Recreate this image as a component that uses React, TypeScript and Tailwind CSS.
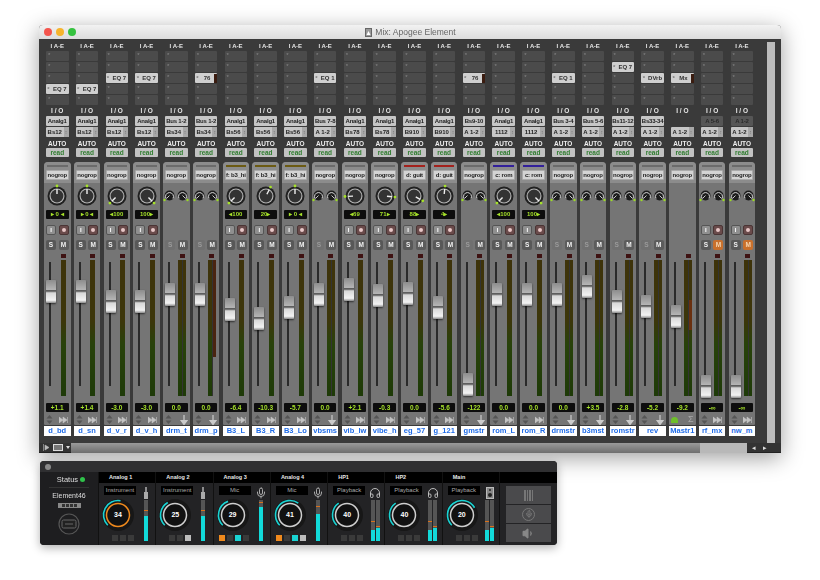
import React from "react";
import { Mic, Headphones, Volume1 } from "lucide-react";

type S = {
  name: string; val: string; fader: number; io1: string; io2: string; dimIo?: boolean;
  ins?: [number, string, boolean?]; group?: string; bar?: string;
  pan?: number | null; panText?: string; small?: boolean; rec?: boolean; aux?: boolean; orangeM?: boolean; master?: boolean; stereo?: boolean;
};

const strips: S[] = [
  { name: "d_bd", val: "+1.1", fader: 280, io1: "Analg1", io2: "Bs12", ins: [3, "EQ 7"], pan: 0, panText: "▸ 0 ◂", rec: true },
  { name: "d_sn", val: "+1.4", fader: 280, io1: "Analg1", io2: "Bs12", ins: [3, "EQ 7"], pan: 0, panText: "▸ 0 ◂", rec: true },
  { name: "d_v_r", val: "-3.0", fader: 290, io1: "Analg1", io2: "Bs12", ins: [2, "EQ 7"], pan: -135, panText: "◂100", rec: true },
  { name: "d_v_h", val: "-3.0", fader: 290, io1: "Analg1", io2: "Bs12", ins: [2, "EQ 7"], pan: 135, panText: "100▸", rec: true },
  { name: "drm_t", val: "0.0", fader: 283, io1: "Bus 1-2", io2: "Bs34", small: true, aux: true, stereo: true },
  { name: "drm_p", val: "0.0", fader: 283, io1: "Bus 1-2", io2: "Bs34", ins: [2, "76", true], small: true, aux: true, stereo: true },
  { name: "B3_L", val: "-6.4", fader: 298, io1: "Analg1", io2: "Bs56", group: "f: b3_hi", bar: "bg-[#6b5a12]", pan: -135, panText: "◂100", rec: true },
  { name: "B3_R", val: "-10.3", fader: 307, io1: "Analg1", io2: "Bs56", group: "f: b3_hi", bar: "bg-[#6b5a12]", pan: 27, panText: "20▸", rec: true },
  { name: "B3_Lo", val: "-5.7", fader: 296, io1: "Analg1", io2: "Bs56", group: "f: b3_hi", bar: "bg-[#6b5a12]", pan: 0, panText: "▸ 0 ◂", rec: true },
  { name: "vbsms", val: "0.0", fader: 283, io1: "Bus 7-8", io2: "A 1-2", ins: [2, "EQ 1"], small: true, aux: true, stereo: true },
  { name: "vib_lw", val: "+2.1", fader: 278, io1: "Analg1", io2: "Bs78", pan: -93, panText: "◂69", rec: true },
  { name: "vibe_h", val: "-0.3", fader: 284, io1: "Analg1", io2: "Bs78", pan: 96, panText: "71▸", rec: true },
  { name: "eg_57", val: "0.0", fader: 282, io1: "Analg1", io2: "B910", group: "d: guit", bar: "bg-[#a3211c]", pan: 119, panText: "88▸", rec: true },
  { name: "g_121", val: "-5.6", fader: 296, io1: "Analg1", io2: "B910", group: "d: guit", bar: "bg-[#a3211c]", pan: 6, panText: "4▸", rec: true },
  { name: "gmstr", val: "-122", fader: 373, io1: "Bs9-10", io2: "A 1-2", ins: [2, "76", true], small: true, aux: true, stereo: true },
  { name: "rom_L", val: "0.0", fader: 283, io1: "Analg1", io2: "1112", group: "c: rom", bar: "bg-[#32209a]", pan: -135, panText: "◂100", rec: true },
  { name: "rom_R", val: "0.0", fader: 283, io1: "Analg1", io2: "1112", group: "c: rom", bar: "bg-[#32209a]", pan: 135, panText: "100▸", rec: true },
  { name: "drmstr", val: "0.0", fader: 283, io1: "Bus 3-4", io2: "A 1-2", ins: [2, "EQ 1"], small: true, aux: true, stereo: true },
  { name: "b3mst", val: "+3.5", fader: 275, io1: "Bus 5-6", io2: "A 1-2", small: true, aux: true, stereo: true },
  { name: "romstr", val: "-2.8", fader: 290, io1: "Bs11-12", io2: "A 1-2", ins: [1, "EQ 7"], small: true, aux: true, stereo: true },
  { name: "rev", val: "-5.2", fader: 295, io1: "Bs33-34", io2: "A 1-2", ins: [2, "DVrb"], small: true, aux: true, stereo: true },
  { name: "Mastr1", val: "-9.2", fader: 305, io1: "", io2: "A 1-2", ins: [2, "Mx", true], master: true, stereo: true },
  { name: "rf_mx", val: "-∞", fader: 375, io1: "A 5-6", io2: "A 1-2", dimIo: true, small: true, rec: true, orangeM: true, stereo: true },
  { name: "nw_m", val: "-∞", fader: 375, io1: "A 1-2", io2: "A 1-2", dimIo: true, small: true, rec: true, orangeM: true, stereo: true },
];

function BigKnob({ angle }: { angle: number }) {
  const rad = (angle * Math.PI) / 180;
  const s = Math.sin(rad), c = Math.cos(rad);
  return (
    <svg width="26" height="26" viewBox="0 0 26 26" className="block">
      <circle cx="13" cy="13" r="9.5" fill="#202020" />
      <circle cx="13" cy="13" r="7.5" fill="#b5b5b5" />
      <circle cx="13" cy="13" r="6.4" fill="#333" />
      <line x1={13 + s * 2} y1={13 - c * 2} x2={13 + s * 7} y2={13 - c * 7} stroke="#eee" strokeWidth="1.4" />
      <circle cx={13 + s * 10} cy={13 - c * 10} r="1.4" fill="#a6e22a" />
    </svg>
  );
}

function SmallKnob({ side }: { side: -1 | 1 }) {
  return (
    <svg width="13" height="14" viewBox="0 0 13 14" className="block">
      <circle cx="6.5" cy="6.5" r="5" fill="#1c1c1c" />
      <path d="M3 9.5A4 4 0 1 1 10 9.5" fill="none" stroke="#ddd" strokeWidth="1" />
      <line x1="6.5" y1="6.5" x2={side < 0 ? 3.5 : 9.5} y2="9.5" stroke="#ddd" strokeWidth="0.9" />
      <circle cx={side < 0 ? 1.5 : 11.5} cy="11" r="1.2" fill="#9bdc24" />
    </svg>
  );
}

function Strip({ s }: { s: S }) {
  const slots = [0, 1, 2, 3, 4];
  return (
    <div className="w-[26.5px] flex flex-col whitespace-nowrap">
      <div className="h-[9px] text-center text-[6px] leading-[9px] font-bold text-[#e6e6e6]">I A-E</div>
      <div className="flex flex-col gap-[1px] px-[2px] h-[54px]">
        {slots.map((i) =>
          s.ins && s.ins[0] === i ? (
            <div key={i} className="h-[10px] bg-[#cfcfcf] rounded-[1px] flex items-center text-[6px] font-bold text-[#333] leading-none">
              <span className="w-[5px] text-center text-[#777]">*</span>
              <span className="flex-1 text-center">{s.ins[1]}</span>
              {s.ins[2] && <span className="w-[3px] h-[9px] bg-[#3a1c10]" />}
            </div>
          ) : (
            <div key={i} className="h-[10px] bg-[#4b4b4b] rounded-[1px] text-[6px] leading-[8px] pl-[2px] text-[#888]">*</div>
          )
        )}
      </div>
      <div className="h-[9px] mt-[1px] text-center text-[6.5px] leading-[9px] font-bold text-[#e6e6e6]">I / O</div>
      <div className="mt-[1px] px-[2px] flex flex-col gap-[1px]">
        {s.io1 ? (
          <div className={`h-[10px] rounded-[1px] text-center text-[6px] leading-[10px] font-bold tracking-[-0.2px] ${s.dimIo ? "bg-[#565656] text-[#2a2a2a]" : "bg-[#c6c6c6] text-[#222]"}`}>{s.io1}</div>
        ) : (
          <div className="h-[10px]" />
        )}
        <div className="h-[10px] rounded-[1px] bg-[#c6c6c6] flex text-[6px] leading-[10px] font-bold text-[#222]">
          <span className="flex-1 text-center">{s.io2}</span>
          <span className="w-[5px] bg-[#a8a8a8] text-[5px] text-center text-[#777]">↕</span>
        </div>
      </div>
      <div className="h-[9px] mt-[2px] text-center text-[6.5px] leading-[9px] font-bold text-[#eee]">AUTO</div>
      <div className="px-[2px]">
        <div className="h-[9px] rounded-[1px] bg-[#c2c2c2] text-center text-[6.5px] leading-[9px] font-bold text-[#2f7d2f]">read</div>
      </div>
      <div className="mt-[5px] h-[263px] rounded-t-[4px] rounded-b-[1px] bg-[#757575] flex flex-col">
        <div className="h-[21px] bg-[#8c8c8c] rounded-t-[4px] px-[2px] pt-[3px] flex flex-col">
          <div className={`h-[2px] mx-[1px] ${s.bar ?? "bg-[#6b6b6b]"}`} />
          <div className="mt-[3px] h-[10px] bg-[#d4d4d4] rounded-[1px] border border-[#aaa] text-center text-[6px] leading-[8px] font-bold text-[#222] tracking-[-0.2px]">{s.group ?? "nogrop"}</div>
        </div>
        <div className="h-[26px] flex items-center justify-center">
          {s.pan !== undefined && s.pan !== null && <BigKnob angle={s.pan} />}
          {s.small && (
            <div className="flex">
              <SmallKnob side={-1} />
              <SmallKnob side={1} />
            </div>
          )}
        </div>
        <div className="h-[9px] mt-[1px] px-[2px]">
          {s.panText && <div className="h-[9px] bg-[#0d0d0d] rounded-[1px] text-center text-[6px] leading-[9px] font-bold text-[#a6e22a]">{s.panText}</div>}
        </div>
        <div className="h-[10px] mt-[6px] px-[2px] flex justify-between">
          {s.rec && (
            <>
              <div className="w-[10px] h-[10px] rounded-[2px] bg-[#8f8f8f] border border-[#555] text-center text-[6px] leading-[8px] font-bold text-white">I</div>
              <div className="w-[10px] h-[10px] rounded-[2px] bg-[#6a4b4b] border border-[#4a3535] flex items-center justify-center">
                <div className="w-[4px] h-[4px] rounded-full bg-[#e8c8c8]" />
              </div>
            </>
          )}
        </div>
        <div className="h-[10px] mt-[5px] px-[2px] flex justify-between">
          {!s.master && (
            <>
              <div className={`w-[10px] h-[10px] rounded-[2px] text-center text-[6.5px] leading-[10px] font-bold ${s.aux ? "bg-[#707070] text-[#9a9a9a]" : "bg-[#585858] text-[#f0f0f0]"}`}>S</div>
              <div className={`w-[10px] h-[10px] rounded-[2px] text-center text-[6.5px] leading-[10px] font-bold ${s.orangeM ? "bg-[#c9702c] text-[#f5d5b0]" : "bg-[#5c5c5c] text-[#f0f0f0]"}`}>M</div>
            </>
          )}
        </div>
        <div className="relative h-[142px] mt-[4px] flex">
          <div className="w-[12px] flex justify-center pt-[8px]">
            <div className="w-[2px] h-[124px] bg-[#2a2a2a]" />
          </div>
          <div className="absolute left-[2px] w-[10px] h-[23px] rounded-[1px] shadow-[0_1px_2px_rgba(0,0,0,0.6)] bg-[linear-gradient(180deg,#8d8d8d_0%,#b4b4b4_42%,#555_46%,#777_50%,#d8d8d8_56%,#f2f2f2_88%,#8a8a8a_100%)]" style={{ top: s.fader - 254 }} />
          <div className="w-[10px] ml-[2px] flex flex-col items-center">
            <div className="h-[4px] w-[5px] bg-[#3e1212]" />
            <div className="mt-[2px] h-[136px] flex gap-0">
              <div className={`h-full ${s.stereo ? "w-[4px]" : "w-[5px]"} bg-[linear-gradient(180deg,#3e330a_0%,#3c360a_45%,#28420a_62%,#1e3a08_100%)]`} />
              {s.stereo && (
                <div className="relative h-full w-[4px] border-l border-[#333] bg-[linear-gradient(180deg,#3e330a_0%,#3c360a_45%,#28420a_62%,#1e3a08_100%)]">
                  {s.name === "drm_p" && <div className="absolute left-0 right-0 top-[97px] bottom-0 bg-[#757575]" />}
                  {s.name === "drm_p" && <div className="absolute left-0 right-0 top-0 h-[97px] bg-[#4a2410]" />}
                  {s.name === "Mastr1" && <div className="absolute left-0 right-0 top-[40px] h-[30px] bg-[#6a3010]" />}
                </div>
              )}
            </div>
          </div>
        </div>
        <div className="mt-[7px] px-[2px]">
          <div className="h-[9px] bg-[#0d0d0d] rounded-[1px] text-center text-[6.5px] leading-[9px] font-bold text-[#a6e22a]">{s.val}</div>
        </div>
        <div className="h-[11px] mt-[2px] px-[2px] flex items-center justify-between">
          {s.master ? (
            <span className="w-[7px] h-[6px] rounded-t-full bg-[#6fbf2a]" />
          ) : (
            <svg width="7" height="9" viewBox="0 0 7 9"><path d="M3.5 0L6.5 3.5H0.5ZM3.5 9L0.5 5.5H6.5Z" fill="#555" /></svg>
          )}
          {s.master ? (
            <span className="text-[9px] leading-none text-[#a8a8a8]">Σ</span>
          ) : s.aux ? (
            <svg width="8" height="10" viewBox="0 0 8 10"><path d="M4 0V7M1 5.5L4 9.5L7 5.5Z" stroke="#ccc" strokeWidth="1.2" fill="#ccc" /></svg>
          ) : (
            <svg width="10" height="8" viewBox="0 0 10 8"><path d="M0 1L4 4L0 7ZM4 1L8 4L4 7ZM8.5 1V7" fill="#c4c4c4" stroke="#c4c4c4" strokeWidth="0.6" /></svg>
          )}
        </div>
      </div>
      <div className="h-[10px] mt-[1px] bg-white text-center text-[7.5px] leading-[10px] font-bold text-[#1f6ce8]">{s.name}</div>
    </div>
  );
}

type P = {
  label: string; mode: string; val: string; end: number; ring: string; icon: "jack" | "mic" | "hp" | "spk";
  levels: { fill: number; tick: number }[]; squares: string[];
};

const sqDark = "bg-[#3a3a3a]";
const panels: P[] = [
  { label: "Analog 1", mode: "Instrument", val: "34", end: 10, ring: "#f08a1d", icon: "jack", levels: [{ fill: 25, tick: 30 }], squares: [sqDark, sqDark, sqDark] },
  { label: "Analog 2", mode: "Instrument", val: "25", end: -30, ring: "#cfcfcf", icon: "jack", levels: [{ fill: 25, tick: 30 }], squares: [sqDark, sqDark, "bg-[#bdbdbd]"] },
  { label: "Analog 3", mode: "Mic", val: "29", end: -20, ring: "#cfcfcf", icon: "mic", levels: [{ fill: 34, tick: 38 }], squares: ["bg-[#f08a1d]", sqDark, "bg-[#19d3d3]", sqDark] },
  { label: "Analog 4", mode: "Mic", val: "41", end: 35, ring: "#cfcfcf", icon: "mic", levels: [{ fill: 27, tick: 34 }], squares: ["bg-[#f08a1d]", sqDark, "bg-[#19d3d3]", "bg-[#bdbdbd]"] },
  { label: "HP1", mode: "Playback", val: "40", end: -35, ring: "#cfcfcf", icon: "hp", levels: [{ fill: 11, tick: 19 }, { fill: 13, tick: 14 }], squares: [sqDark, sqDark, sqDark] },
  { label: "HP2", mode: "Playback", val: "40", end: -35, ring: "#cfcfcf", icon: "hp", levels: [{ fill: 11, tick: 19 }, { fill: 13, tick: 14 }], squares: [sqDark, sqDark, sqDark] },
  { label: "Main", mode: "Playback", val: "20", end: 60, ring: "#cfcfcf", icon: "spk", levels: [{ fill: 11, tick: 19 }, { fill: 13, tick: 14 }], squares: [sqDark, sqDark, sqDark] },
];

function arc(r: number, a0: number, a1: number, c = 18) {
  const p = (a: number) => [c + r * Math.sin((a * Math.PI) / 180), c - r * Math.cos((a * Math.PI) / 180)];
  const [x0, y0] = p(a0), [x1, y1] = p(a1);
  return `M${x0} ${y0}A${r} ${r} 0 ${a1 - a0 > 180 ? 1 : 0} 1 ${x1} ${y1}`;
}

function Icon({ t }: { t: P["icon"] }) {
  if (t === "mic") return <Mic size={12} strokeWidth={2} color="#aaa" />;
  if (t === "hp") return <Headphones size={12} strokeWidth={1.8} color="#ccc" />;
  if (t === "spk")
    return (
      <svg width="8" height="12" viewBox="0 0 8 12">
        <rect x="0.5" y="0.5" width="7" height="11" fill="#888" stroke="#bbb" />
        <circle cx="4" cy="3" r="1" fill="#222" />
        <circle cx="4" cy="8" r="2" fill="#222" />
      </svg>
    );
  return (
    <svg width="6" height="12" viewBox="0 0 6 12">
      <rect x="2.3" y="0" width="1.4" height="5" fill="#bbb" />
      <rect x="1" y="5" width="4" height="7" fill="#aaa" />
    </svg>
  );
}

function Panel({ p }: { p: P }) {
  return (
    <div className="flex flex-col border-l border-[#111] bg-[#232325] whitespace-nowrap">
      <div className="h-[11px] bg-black pl-[10px] text-[5.5px] leading-[11px] font-bold text-[#e8e8e8]">{p.label}</div>
      <div className="flex-1 flex">
        <div className="w-[38px] pl-[5px] flex flex-col">
          <div className="mt-[3px] w-[32px] h-[9px] bg-black text-center text-[6px] leading-[9px] text-[#aaa]">{p.mode}</div>
          <div className="relative w-[36px] h-[36px] mt-[2px] -ml-[4px] flex items-center justify-center">
            <svg width="36" height="36" viewBox="0 0 36 36" className="absolute inset-0">
              <circle cx="18" cy="18" r="16" fill="#171717" />
              <path d={arc(14.5, -135, p.end)} fill="none" stroke="#19d3d3" strokeWidth="1.6" />
              <circle cx="18" cy="18" r="11.5" fill="#111" stroke={p.ring} strokeWidth="1.5" />
            </svg>
            <span className="relative text-[7px] font-bold text-white">{p.val}</span>
          </div>
          <div className="mt-[2px] flex gap-[2px] justify-end w-[30px]">
            {p.squares.map((c, i) => (
              <div key={i} className={`w-[6px] h-[6px] ${c}`} />
            ))}
          </div>
        </div>
        <div className="flex-1 flex flex-col items-center pt-[3px]">
          <div className="h-[13px] flex items-center"><Icon t={p.icon} /></div>
          <div className="mt-[1px] h-[41px] flex gap-[1px]">
            {p.levels.map((l, i) => (
              <div key={i} className="relative h-full w-[4px] bg-[#555]">
                <div className="absolute left-0 right-0 bottom-0 bg-[#12dada]" style={{ height: l.fill }} />
                <div className="absolute left-0 right-0 h-[1.5px] bg-[#d9701a]" style={{ bottom: l.tick }} />
              </div>
            ))}
          </div>
        </div>
      </div>
    </div>
  );
}

export default function App() {
  return (
    <div className="w-[820px] h-[580px] bg-white overflow-hidden pl-[39px] pt-[25px] [font-family:'Liberation_Sans',Arial,sans-serif]">
      <div className="w-[742px] h-[428px] flex flex-col rounded-t-[4px] shadow-[0_5px_22px_rgba(0,0,0,0.38)] bg-[#3a3a3a] blur-[0.35px]">
        <div className="h-[14px] rounded-t-[4px] bg-[linear-gradient(180deg,#f2f2f2,#dcdcdc)] flex items-center pl-[5px]">
          <div className="w-[8px] h-[8px] rounded-full bg-[#f4544c]" />
          <div className="w-[8px] h-[8px] rounded-full bg-[#f6b42c] ml-[4px]" />
          <div className="w-[8px] h-[8px] rounded-full bg-[#35c23f] ml-[4px]" />
          <div className="flex-1 flex items-center justify-center gap-[3px] text-[8.5px] text-[#666] pr-[36px]">
            <svg width="7" height="9" viewBox="0 0 7 9"><rect x="0.5" y="0.5" width="6" height="8" fill="#999" stroke="#666" /><path d="M1.5 7L3.5 3L5.5 7Z" fill="#fff" /></svg>
            <span>Mix: Apogee Element</span>
          </div>
        </div>
        <div className="flex-1 flex min-h-0">
          <div className="w-[728px] pl-[5px] pt-[3px] grid grid-cols-[repeat(24,26.5px)] gap-x-[3.27px] content-start bg-[#3a3a3a]">
            {strips.map((s) => (
              <Strip key={s.name} s={s} />
            ))}
          </div>
          <div className="w-[8px] mt-[3px] h-[401px] bg-[#bcbcbc]" />
        </div>
        <div className="h-[10px] flex items-center bg-[#333] border-b border-[#222]">
          <div className="w-[32px] pl-[4px] flex items-center gap-[3px]">
            <svg width="7" height="7" viewBox="0 0 7 7"><path d="M0.5 0V7M2 1L6 3.5L2 6Z" fill="#bbb" stroke="#bbb" strokeWidth="0.6" /></svg>
            <div className="w-[10px] h-[7px] border border-[#ddd] bg-[#777]" />
            <svg width="4" height="3" viewBox="0 0 4 3"><path d="M0 0H4L2 3Z" fill="#ddd" /></svg>
          </div>
          <div className="w-[629px] h-[10px] bg-[linear-gradient(180deg,#9a9a9a,#6e6e6e)]" />
          <div className="w-[47px] h-[10px] bg-[#b8b8b8]" />
          <div className="flex ml-[3px] gap-[3px]">
            <div className="w-[8px] h-[8px] text-[7px] leading-[8px] text-center text-[#ddd]">◂</div>
            <div className="w-[8px] h-[8px] text-[7px] leading-[8px] text-center text-[#ddd]">▸</div>
          </div>
        </div>
      </div>
      <div className="ml-[1px] mt-[8px] w-[517px] h-[84px] rounded-[4px] bg-[#2a2a2c] shadow-[0_3px_10px_rgba(0,0,0,0.3)] flex flex-col overflow-hidden blur-[0.3px]">
        <div className="h-[11px] bg-[#2f2f31] pl-[5px] flex items-center">
          <div className="w-[6px] h-[6px] rounded-full bg-[#8a8a8a]" />
        </div>
        <div className="flex-1 grid grid-cols-[58px_repeat(7,57.3px)_1fr]">
          <div className="flex flex-col items-center bg-[#1e1e20] whitespace-nowrap">
            <div className="h-[13px] mt-[1px] flex items-center gap-[2px] text-[7.5px] text-[#ddd] pl-[4px]">
              <span>Status</span>
              <span className="w-[5px] h-[5px] rounded-full bg-[#2fc24a]" />
            </div>
            <div className="w-[40px] h-[1px] bg-[#333] mt-[1px]" />
            <div className="text-[7px] leading-[10px] mt-[3px] text-[#ddd]">Element46</div>
            <div className="w-[23px] h-[5px] mt-[2px] bg-[#888] flex items-center justify-center gap-[1px]">
              <div className="w-[3px] h-[3px] bg-[#333]" />
              <div className="w-[3px] h-[3px] bg-[#333]" />
              <div className="w-[3px] h-[3px] bg-[#333]" />
              <div className="w-[3px] h-[3px] bg-[#333]" />
            </div>
            <svg width="26" height="26" viewBox="0 0 26 26" className="mt-[3px]">
              <circle cx="13" cy="13" r="10" fill="none" stroke="#555" strokeWidth="1.2" />
              <rect x="6" y="9" width="14" height="8" rx="1.5" fill="#222" stroke="#666" />
              <path d="M9 13H17" stroke="#666" />
            </svg>
          </div>
          {panels.map((p) => (
            <Panel key={p.label} p={p} />
          ))}
          <div className="flex flex-col border-l border-[#111] bg-[#232325]">
            <div className="h-[11px] bg-black" />
            <div className="flex-1 px-[6px] pt-[3px] flex flex-col gap-[1px]">
              <div className="h-[18px] bg-[#4a4a4c] flex items-center justify-center gap-[1px]">
                <div className="w-[1.5px] h-[11px] bg-[#777]" />
                <div className="w-[1.5px] h-[11px] bg-[#777]" />
                <div className="w-[1.5px] h-[11px] bg-[#777]" />
                <div className="w-[1.5px] h-[11px] bg-[#777]" />
              </div>
              <div className="h-[18px] bg-[#4a4a4c] flex items-center justify-center">
                <div className="w-[13px] h-[13px] rounded-full border border-[#777] flex items-center justify-center">
                  <Mic size={8} color="#888" />
                </div>
              </div>
              <div className="h-[18px] bg-[#4a4a4c] flex items-center justify-center">
                <Volume1 size={13} color="#888" fill="#888" />
              </div>
            </div>
          </div>
        </div>
      </div>
    </div>
  );
}
